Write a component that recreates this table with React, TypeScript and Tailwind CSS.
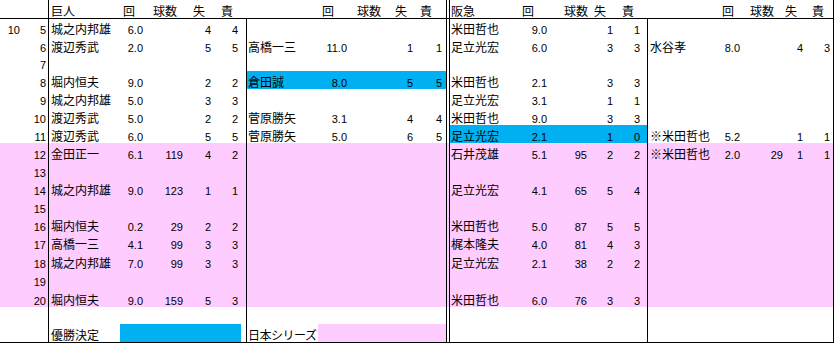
import React from "react";

type Rec = [string, string, string, string, string] | null;

const BLUE = "bg-[#00b0f0]";
const PINK = "bg-[#ffccff]";

const GW = [
  "w-[69px] pl-[2px]",
  "w-[27px] justify-end pr-[2px]",
  "w-[40px] justify-end pr-[2px]",
  "w-[28px] justify-end pr-[2px]",
  "w-[33px] justify-end pr-[8px]",
];
const MW = [
  "w-[80px] pl-[1px]",
  "w-[22px] justify-end pr-[2px]",
  "w-[40px] justify-end pr-[2px]",
  "w-[25px] justify-end pr-[1px]",
  "w-[32px] justify-end pr-[4px]",
];
const HW = [
  "w-[72px] pl-[1px]",
  "w-[26px] justify-end pr-[1px]",
  "w-[40px] justify-end pr-[1px]",
  "w-[25px] justify-end",
  "w-[34px] justify-end pr-[7px]",
];
const LW = [
  "w-[72px] pl-[2px]",
  "w-[22px] justify-end pr-[2px]",
  "w-[43px] justify-end pr-[2px]",
  "w-[20px] justify-end pr-[2px]",
  "w-[28px] justify-end pr-[3px]",
];

type RowData = {
  h: string;
  a?: string;
  b: string;
  g: Rec;
  m: Rec;
  k: Rec;
  l: Rec;
  pink?: boolean;
  mBlue?: boolean;
  kBlue?: boolean;
};

const rows: RowData[] = [
  { h: "h-[17px]", a: "10", b: "5", g: ["城之内邦雄", "6.0", "", "4", "4"], m: null, k: ["米田哲也", "9.0", "", "1", "1"], l: null },
  { h: "h-[18px]", b: "6", g: ["渡辺秀武", "2.0", "", "5", "5"], m: ["高橋一三", "11.0", "", "1", "1"], k: ["足立光宏", "6.0", "", "3", "3"], l: ["水谷孝", "8.0", "", "4", "3"] },
  { h: "h-[17px]", b: "7", g: null, m: null, k: null, l: null },
  { h: "h-[18px]", b: "8", g: ["堀内恒夫", "9.0", "", "2", "2"], m: ["倉田誠", "8.0", "", "5", "5"], k: ["米田哲也", "2.1", "", "3", "3"], l: null, mBlue: true },
  { h: "h-[18px]", b: "9", g: ["城之内邦雄", "5.0", "", "3", "3"], m: null, k: ["足立光宏", "3.1", "", "1", "1"], l: null },
  { h: "h-[18px]", b: "10", g: ["渡辺秀武", "5.0", "", "2", "2"], m: ["菅原勝矢", "3.1", "", "4", "4"], k: ["米田哲也", "9.0", "", "3", "3"], l: null },
  { h: "h-[18px]", b: "11", g: ["渡辺秀武", "6.0", "", "5", "5"], m: ["菅原勝矢", "5.0", "", "6", "5"], k: ["足立光宏", "2.1", "", "1", "0"], l: ["※米田哲也", "5.2", "", "1", "1"], kBlue: true },
  { h: "h-[18px]", b: "12", g: ["金田正一", "6.1", "119", "4", "2"], m: null, k: ["石井茂雄", "5.1", "95", "2", "2"], l: ["※米田哲也", "2.0", "29", "1", "1"], pink: true },
  { h: "h-[18px]", b: "13", g: null, m: null, k: null, l: null, pink: true },
  { h: "h-[18px]", b: "14", g: ["城之内邦雄", "9.0", "123", "1", "1"], m: null, k: ["足立光宏", "4.1", "65", "5", "4"], l: null, pink: true },
  { h: "h-[18px]", b: "15", g: null, m: null, k: null, l: null, pink: true },
  { h: "h-[18px]", b: "16", g: ["堀内恒夫", "0.2", "29", "2", "2"], m: null, k: ["米田哲也", "5.0", "87", "5", "5"], l: null, pink: true },
  { h: "h-[18px]", b: "17", g: ["高橋一三", "4.1", "99", "3", "3"], m: null, k: ["梶本隆夫", "4.0", "81", "4", "3"], l: null, pink: true },
  { h: "h-[19px]", b: "18", g: ["城之内邦雄", "7.0", "99", "3", "3"], m: null, k: ["足立光宏", "2.1", "38", "2", "2"], l: null, pink: true },
  { h: "h-[18px]", b: "19", g: null, m: null, k: null, l: null, pink: true },
  { h: "h-[19px]", b: "20", g: ["堀内恒夫", "9.0", "159", "5", "3"], m: null, k: ["米田哲也", "6.0", "76", "3", "3"], l: null, pink: true },
];

function Section({ data, widths, bg }: { data: Rec; widths: string[]; bg?: string }) {
  return (
    <div className={`flex shrink-0 ${bg ?? ""}`}>
      {widths.map((w, i) => (
        <div
          key={i}
          className={`flex items-end whitespace-nowrap shrink-0 ${i === 0 ? "text-[12px] leading-[12px]" : "text-[11px] leading-[11px]"} ${w}`}
        >
          {data ? data[i] : ""}
        </div>
      ))}
    </div>
  );
}

function VLine() {
  return <div className="w-px shrink-0 bg-black" />;
}

function DLine() {
  return <div className="w-[4px] shrink-0 border-x border-black" />;
}

function Row({ r }: { r: RowData }) {
  return (
    <div className={`flex ${r.h} ${r.pink ? PINK : ""}`}>
      <div className="w-[24px] shrink-0 flex items-end justify-end pr-[4px] text-[11px] leading-[11px]">{r.a ?? ""}</div>
      <div className="w-[24px] shrink-0 flex items-end justify-end pr-[2px] text-[11px] leading-[11px]">{r.b}</div>
      <VLine />
      <Section data={r.g} widths={GW} />
      <VLine />
      <Section data={r.m} widths={MW} bg={r.mBlue ? BLUE : ""} />
      <DLine />
      <Section data={r.k} widths={HW} bg={r.kBlue ? BLUE : ""} />
      <VLine />
      <Section data={r.l} widths={LW} />
      <VLine />
    </div>
  );
}

export default function App() {
  return (
    <div className="w-[834px] h-[343px] overflow-hidden bg-white text-black font-['Liberation_Sans','Noto_Sans_CJK_JP',sans-serif]">
      {/* header */}
      <div className="flex h-[19px] border-b border-black text-[12px] leading-[12px]">
        <div className="w-[48px] shrink-0" />
        <VLine />
        <div className="w-[197px] shrink-0 flex items-end whitespace-nowrap">
          <span className="ml-[2px]">巨人</span>
          <span className="ml-[48px]">回</span>
          <span className="ml-[18px]">球数</span>
          <span className="ml-[16px]">失</span>
          <span className="ml-[16px]">責</span>
        </div>
        <div className="w-px shrink-0" />
        <div className="w-[199px] shrink-0 flex items-end whitespace-nowrap">
          <span className="ml-[75px]">回</span>
          <span className="ml-[23px]">球数</span>
          <span className="ml-[14px]">失</span>
          <span className="ml-[13px]">責</span>
        </div>
        <DLine />
        <div className="w-[197px] shrink-0 flex items-end whitespace-nowrap">
          <span className="ml-[1px]">阪急</span>
          <span className="ml-[47px]">回</span>
          <span className="ml-[30px]">球数</span>
          <span className="ml-[6px]">失</span>
          <span className="ml-[16px]">責</span>
        </div>
        <div className="w-px shrink-0" />
        <div className="w-[185px] shrink-0 flex items-end whitespace-nowrap">
          <span className="ml-[74px]">回</span>
          <span className="ml-[16px]">球数</span>
          <span className="ml-[11px]">失</span>
          <span className="ml-[15px]">責</span>
        </div>
        <VLine />
      </div>

      {rows.map((r, i) => (
        <Row key={i} r={r} />
      ))}

      {/* row 21 */}
      <div className="flex h-[17px]">
        <div className="w-[48px] shrink-0" />
        <VLine />
        <div className="w-[197px] shrink-0" />
        <VLine />
        <div className="w-[199px] shrink-0" />
        <DLine />
        <div className="w-[197px] shrink-0" />
        <VLine />
        <div className="w-[185px] shrink-0" />
        <VLine />
      </div>

      {/* row 22 */}
      <div className="flex h-[19px] border-b border-black text-[12px] leading-[12px]">
        <div className="w-[48px] shrink-0" />
        <VLine />
        <div className="w-[71px] shrink-0 pl-[2px] flex items-end whitespace-nowrap">優勝決定</div>
        <div className={`w-[121px] shrink-0 ${BLUE}`} />
        <div className="w-[5px] shrink-0" />
        <VLine />
        <div className="w-[71px] shrink-0 pl-[1px] flex items-end whitespace-nowrap tracking-[-0.5px]">日本シリーズ</div>
        <div className={`w-[128px] shrink-0 ${PINK}`} />
        <DLine />
        <div className="w-[197px] shrink-0" />
        <VLine />
        <div className="w-[185px] shrink-0" />
        <VLine />
      </div>
    </div>
  );
}
